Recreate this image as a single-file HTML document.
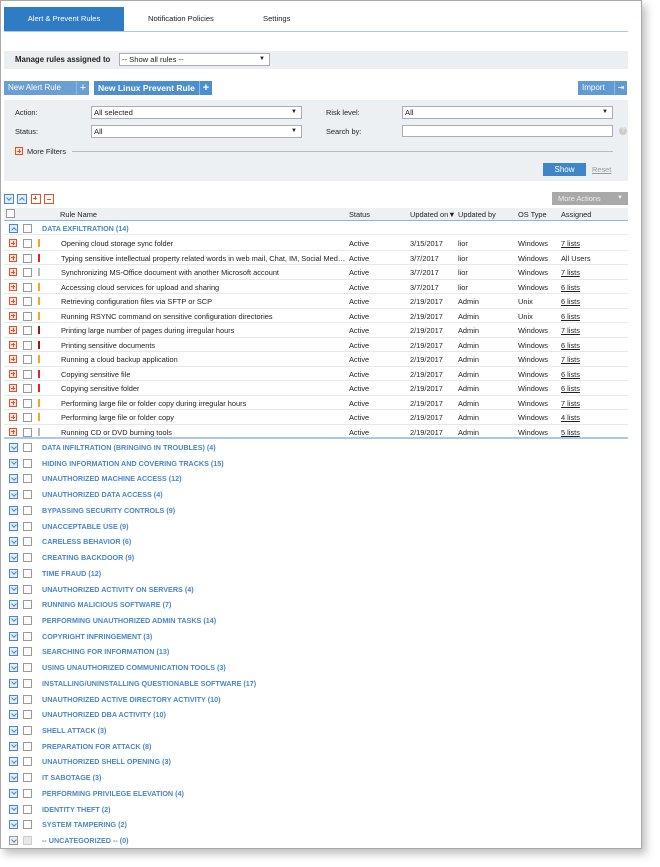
<!DOCTYPE html>
<html><head><meta charset="utf-8"><style>
*{box-sizing:border-box;margin:0;padding:0}
body{width:660px;height:867px;background:#fff;font-family:"Liberation Sans",sans-serif;font-size:7.4px;color:#222;position:relative;overflow:hidden}
.a{position:absolute;white-space:nowrap}
#frame{position:absolute;left:0;top:0;width:642px;height:849px;border:1px solid #a8a8a8;box-shadow:4px 5px 8px rgba(0,0,0,.25);background:#fff}
.sel{position:absolute;background:#fff;border:1px solid #aab;height:13px;font-size:7.6px;padding-left:2px;line-height:11px}
.sel:after{content:"▼";position:absolute;right:4px;top:0;font-size:6px}
.btn{position:absolute;background:#4d8fcd;color:#fff;height:14px;line-height:14px;font-size:8px;padding-left:4px}
.pl{position:absolute;right:0;top:0;width:13px;height:14px;border-left:1px solid #8fb8e0;text-align:center;font-size:11px;line-height:14px}
.cb{position:absolute;width:9px;height:9px;border:1px solid #999;background:#fff}
.ex{position:absolute;width:8px;height:8px;border:1px solid #e0522a;background:#fde2d8}
.ex:before{content:"";position:absolute;left:1px;top:2.5px;width:4px;height:1px;background:#e0522a}
.ex:after{content:"";position:absolute;left:2.5px;top:1px;width:1px;height:4px;background:#e0522a}
.gx{position:absolute;width:9px;height:9px;border:1px solid #4a86c8;background:#e3eefa}
.gx:after{content:"";position:absolute;left:1.5px;top:0.5px;width:3px;height:3px;border-right:1px solid #4a86c8;border-bottom:1px solid #4a86c8;transform:rotate(45deg)}
.gx.up:after{top:2.5px;transform:rotate(225deg)}
.g{position:absolute;left:42px;font-weight:bold;color:#4a86c8;font-size:7.2px;white-space:nowrap}
.bar{position:absolute;width:2px;height:8px}
.r{position:absolute;left:4px;width:624px;height:14.5px;border-bottom:1px solid #e6e9ec}
.n{position:absolute;left:61px;max-width:285px;overflow:hidden;text-overflow:ellipsis;white-space:nowrap}
u{text-decoration:underline}
</style></head><body>
<div id="frame"></div>
<div class="a" style="left:4px;top:7px;width:120px;height:24px;background:#2f7bc4;color:#fff;text-align:center;line-height:24px;font-size:7.6px">Alert &amp; Prevent Rules</div>
<div class="a" style="left:148px;top:14px;font-size:7.6px">Notification Policies</div>
<div class="a" style="left:263px;top:14px;font-size:7.6px">Settings</div>
<div class="a" style="left:4px;top:31px;width:624px;height:1px;background:#a9c9e8"></div>
<div class="a" style="left:4px;top:51px;width:624px;height:18px;background:#eceff2"></div>
<div class="a" style="left:15px;top:55px;font-weight:bold;font-size:7.8px">Manage rules assigned to</div>
<div class="sel" style="left:119px;top:53px;width:151px">-- Show all rules --</div>
<div class="btn" style="left:4px;top:81px;width:85px;background:#6b9fd4">New Alert Rule<span class="pl">+</span></div>
<div class="btn" style="left:94px;top:81px;width:118px;font-weight:bold;font-size:8.5px">New Linux Prevent Rule<span class="pl">+</span></div>
<div class="btn" style="left:578px;top:81px;width:49px;background:#5f9ad3">Import<span class="pl" style="font-size:8px">⇥</span></div>
<div class="a" style="left:4px;top:100px;width:624px;height:81px;background:#edf0f3"></div>
<div class="a" style="left:15px;top:108px">Action:</div>
<div class="sel" style="left:91px;top:106px;width:211px">All selected</div>
<div class="a" style="left:15px;top:127px">Status:</div>
<div class="sel" style="left:91px;top:125px;width:211px">All</div>
<div class="a" style="left:326px;top:108px">Risk level:</div>
<div class="sel" style="left:402px;top:106px;width:211px">All</div>
<div class="a" style="left:326px;top:127px">Search by:</div>
<div class="a" style="left:402px;top:125px;width:211px;height:12px;background:#fff;border:1px solid #aab"></div>
<div class="a" style="left:619px;top:127px;width:8px;height:8px;border-radius:50%;background:#ccc;color:#fff;font-size:6px;text-align:center;line-height:8px">?</div>
<div class="ex" style="left:15px;top:147px"></div>
<div class="a" style="left:27px;top:147px">More Filters</div>
<div class="a" style="left:72px;top:151px;width:541px;height:1px;background:#bbb"></div>
<div class="btn" style="left:543px;top:163px;width:43px;height:13px;line-height:13px;text-align:center;padding:0;background:#3f86c9">Show</div>
<div class="a" style="left:592px;top:165px;color:#999;text-decoration:underline">Reset</div>
<div class="gx" style="left:4px;top:194px;width:10px;height:10px"></div>
<div class="gx up" style="left:17px;top:194px;width:10px;height:10px"></div>
<div class="ex" style="left:31px;top:194px;width:10px;height:10px;background:#fff"></div>
<div class="a" style="left:44px;top:194px;width:10px;height:10px;border:1px solid #e0522a;background:#fff"><div style="position:absolute;left:2px;top:3.5px;width:4px;height:1px;background:#e0522a"></div></div>
<div class="a" style="left:552px;top:192px;width:76px;height:13px;background:#a9a9a9;color:#eee;line-height:13px;padding-left:6px">More Actions<span style="position:absolute;right:5px;font-size:6px">▼</span></div>
<div class="a" style="left:4px;top:208px;width:624px;height:13px;background:#eef0f2;border-bottom:1px solid #8db6de"></div>
<div class="cb" style="left:6px;top:209px"></div>
<div class="a" style="left:60px;top:210px">Rule Name</div>
<div class="a" style="left:349px;top:210px">Status</div>
<div class="a" style="left:410px;top:210px">Updated on▼</div>
<div class="a" style="left:458px;top:210px">Updated by</div>
<div class="a" style="left:518px;top:210px">OS Type</div>
<div class="a" style="left:561px;top:210px">Assigned</div>
<div class="r" style="top:221px;height:14px"></div>
<div class="gx up" style="left:9px;top:224px"></div>
<div class="cb" style="left:23px;top:224px"></div>
<div class="g" style="top:224px">DATA EXFILTRATION (14)</div>
<div class="r" style="top:236px"></div><div class="ex" style="left:9px;top:239px"></div><div class="cb" style="left:23px;top:239px"></div><div class="bar" style="left:38px;top:239px;background:#f5a623"></div><div class="n" style="top:239px">Opening cloud storage sync folder</div><div class="a" style="left:349px;top:239px">Active</div><div class="a" style="left:410px;top:239px">3/15/2017</div><div class="a" style="left:458px;top:239px">lior</div><div class="a" style="left:518px;top:239px">Windows</div><div class="a" style="left:561px;top:239px"><u>7 lists</u></div>
<div class="r" style="top:250.5px"></div><div class="ex" style="left:9px;top:253.5px"></div><div class="cb" style="left:23px;top:253.5px"></div><div class="bar" style="left:38px;top:253.5px;background:#e8212a"></div><div class="n" style="top:253.5px">Typing sensitive intellectual property related words in web mail, Chat, IM, Social Media...</div><div class="a" style="left:349px;top:253.5px">Active</div><div class="a" style="left:410px;top:253.5px">3/7/2017</div><div class="a" style="left:458px;top:253.5px">lior</div><div class="a" style="left:518px;top:253.5px">Windows</div><div class="a" style="left:561px;top:253.5px">All Users</div>
<div class="r" style="top:265px"></div><div class="ex" style="left:9px;top:268px"></div><div class="cb" style="left:23px;top:268px"></div><div class="bar" style="left:38px;top:268px;background:#bbb"></div><div class="n" style="top:268px">Synchronizing MS-Office document with another Microsoft account</div><div class="a" style="left:349px;top:268px">Active</div><div class="a" style="left:410px;top:268px">3/7/2017</div><div class="a" style="left:458px;top:268px">lior</div><div class="a" style="left:518px;top:268px">Windows</div><div class="a" style="left:561px;top:268px"><u>7 lists</u></div>
<div class="r" style="top:279.5px"></div><div class="ex" style="left:9px;top:282.5px"></div><div class="cb" style="left:23px;top:282.5px"></div><div class="bar" style="left:38px;top:282.5px;background:#f5a623"></div><div class="n" style="top:282.5px">Accessing cloud services for upload and sharing</div><div class="a" style="left:349px;top:282.5px">Active</div><div class="a" style="left:410px;top:282.5px">3/7/2017</div><div class="a" style="left:458px;top:282.5px">lior</div><div class="a" style="left:518px;top:282.5px">Windows</div><div class="a" style="left:561px;top:282.5px"><u>6 lists</u></div>
<div class="r" style="top:294px"></div><div class="ex" style="left:9px;top:297px"></div><div class="cb" style="left:23px;top:297px"></div><div class="bar" style="left:38px;top:297px;background:#f5a623"></div><div class="n" style="top:297px">Retrieving configuration files via SFTP or SCP</div><div class="a" style="left:349px;top:297px">Active</div><div class="a" style="left:410px;top:297px">2/19/2017</div><div class="a" style="left:458px;top:297px">Admin</div><div class="a" style="left:518px;top:297px">Unix</div><div class="a" style="left:561px;top:297px"><u>6 lists</u></div>
<div class="r" style="top:308.5px"></div><div class="ex" style="left:9px;top:311.5px"></div><div class="cb" style="left:23px;top:311.5px"></div><div class="bar" style="left:38px;top:311.5px;background:#f5a623"></div><div class="n" style="top:311.5px">Running RSYNC command on sensitive configuration directories</div><div class="a" style="left:349px;top:311.5px">Active</div><div class="a" style="left:410px;top:311.5px">2/19/2017</div><div class="a" style="left:458px;top:311.5px">Admin</div><div class="a" style="left:518px;top:311.5px">Unix</div><div class="a" style="left:561px;top:311.5px"><u>6 lists</u></div>
<div class="r" style="top:323px"></div><div class="ex" style="left:9px;top:326px"></div><div class="cb" style="left:23px;top:326px"></div><div class="bar" style="left:38px;top:326px;background:#a0161c"></div><div class="n" style="top:326px">Printing large number of pages during irregular hours</div><div class="a" style="left:349px;top:326px">Active</div><div class="a" style="left:410px;top:326px">2/19/2017</div><div class="a" style="left:458px;top:326px">Admin</div><div class="a" style="left:518px;top:326px">Windows</div><div class="a" style="left:561px;top:326px"><u>7 lists</u></div>
<div class="r" style="top:337.5px"></div><div class="ex" style="left:9px;top:340.5px"></div><div class="cb" style="left:23px;top:340.5px"></div><div class="bar" style="left:38px;top:340.5px;background:#a0161c"></div><div class="n" style="top:340.5px">Printing sensitive documents</div><div class="a" style="left:349px;top:340.5px">Active</div><div class="a" style="left:410px;top:340.5px">2/19/2017</div><div class="a" style="left:458px;top:340.5px">Admin</div><div class="a" style="left:518px;top:340.5px">Windows</div><div class="a" style="left:561px;top:340.5px"><u>6 lists</u></div>
<div class="r" style="top:352px"></div><div class="ex" style="left:9px;top:355px"></div><div class="cb" style="left:23px;top:355px"></div><div class="bar" style="left:38px;top:355px;background:#f5a623"></div><div class="n" style="top:355px">Running a cloud backup application</div><div class="a" style="left:349px;top:355px">Active</div><div class="a" style="left:410px;top:355px">2/19/2017</div><div class="a" style="left:458px;top:355px">Admin</div><div class="a" style="left:518px;top:355px">Windows</div><div class="a" style="left:561px;top:355px"><u>7 lists</u></div>
<div class="r" style="top:366.5px"></div><div class="ex" style="left:9px;top:369.5px"></div><div class="cb" style="left:23px;top:369.5px"></div><div class="bar" style="left:38px;top:369.5px;background:#e8212a"></div><div class="n" style="top:369.5px">Copying sensitive file</div><div class="a" style="left:349px;top:369.5px">Active</div><div class="a" style="left:410px;top:369.5px">2/19/2017</div><div class="a" style="left:458px;top:369.5px">Admin</div><div class="a" style="left:518px;top:369.5px">Windows</div><div class="a" style="left:561px;top:369.5px"><u>6 lists</u></div>
<div class="r" style="top:381px"></div><div class="ex" style="left:9px;top:384px"></div><div class="cb" style="left:23px;top:384px"></div><div class="bar" style="left:38px;top:384px;background:#e8212a"></div><div class="n" style="top:384px">Copying sensitive folder</div><div class="a" style="left:349px;top:384px">Active</div><div class="a" style="left:410px;top:384px">2/19/2017</div><div class="a" style="left:458px;top:384px">Admin</div><div class="a" style="left:518px;top:384px">Windows</div><div class="a" style="left:561px;top:384px"><u>6 lists</u></div>
<div class="r" style="top:395.5px"></div><div class="ex" style="left:9px;top:398.5px"></div><div class="cb" style="left:23px;top:398.5px"></div><div class="bar" style="left:38px;top:398.5px;background:#f5a623"></div><div class="n" style="top:398.5px">Performing large file or folder copy during irregular hours</div><div class="a" style="left:349px;top:398.5px">Active</div><div class="a" style="left:410px;top:398.5px">2/19/2017</div><div class="a" style="left:458px;top:398.5px">Admin</div><div class="a" style="left:518px;top:398.5px">Windows</div><div class="a" style="left:561px;top:398.5px"><u>7 lists</u></div>
<div class="r" style="top:410px"></div><div class="ex" style="left:9px;top:413px"></div><div class="cb" style="left:23px;top:413px"></div><div class="bar" style="left:38px;top:413px;background:#f5a623"></div><div class="n" style="top:413px">Performing large file or folder copy</div><div class="a" style="left:349px;top:413px">Active</div><div class="a" style="left:410px;top:413px">2/19/2017</div><div class="a" style="left:458px;top:413px">Admin</div><div class="a" style="left:518px;top:413px">Windows</div><div class="a" style="left:561px;top:413px"><u>4 lists</u></div>
<div class="r" style="top:424.5px;border-bottom:2px solid #a9c9e8"></div><div class="ex" style="left:9px;top:427.5px"></div><div class="cb" style="left:23px;top:427.5px"></div><div class="bar" style="left:38px;top:427.5px;background:#bbb"></div><div class="n" style="top:427.5px">Running CD or DVD burning tools</div><div class="a" style="left:349px;top:427.5px">Active</div><div class="a" style="left:410px;top:427.5px">2/19/2017</div><div class="a" style="left:458px;top:427.5px">Admin</div><div class="a" style="left:518px;top:427.5px">Windows</div><div class="a" style="left:561px;top:427.5px"><u>5 lists</u></div>
<div class="gx" style="left:9px;top:443px"></div><div class="cb" style="left:23px;top:443px"></div><div class="g" style="top:443px">DATA INFILTRATION (BRINGING IN TROUBLES) (4)</div>
<div class="gx" style="left:9px;top:458.7px"></div><div class="cb" style="left:23px;top:458.7px"></div><div class="g" style="top:458.7px">HIDING INFORMATION AND COVERING TRACKS (15)</div>
<div class="gx" style="left:9px;top:474.4px"></div><div class="cb" style="left:23px;top:474.4px"></div><div class="g" style="top:474.4px">UNAUTHORIZED MACHINE ACCESS (12)</div>
<div class="gx" style="left:9px;top:490.2px"></div><div class="cb" style="left:23px;top:490.2px"></div><div class="g" style="top:490.2px">UNAUTHORIZED DATA ACCESS (4)</div>
<div class="gx" style="left:9px;top:505.9px"></div><div class="cb" style="left:23px;top:505.9px"></div><div class="g" style="top:505.9px">BYPASSING SECURITY CONTROLS (9)</div>
<div class="gx" style="left:9px;top:521.6px"></div><div class="cb" style="left:23px;top:521.6px"></div><div class="g" style="top:521.6px">UNACCEPTABLE USE (9)</div>
<div class="gx" style="left:9px;top:537.3px"></div><div class="cb" style="left:23px;top:537.3px"></div><div class="g" style="top:537.3px">CARELESS BEHAVIOR (6)</div>
<div class="gx" style="left:9px;top:553px"></div><div class="cb" style="left:23px;top:553px"></div><div class="g" style="top:553px">CREATING BACKDOOR (9)</div>
<div class="gx" style="left:9px;top:568.8px"></div><div class="cb" style="left:23px;top:568.8px"></div><div class="g" style="top:568.8px">TIME FRAUD (12)</div>
<div class="gx" style="left:9px;top:584.5px"></div><div class="cb" style="left:23px;top:584.5px"></div><div class="g" style="top:584.5px">UNAUTHORIZED ACTIVITY ON SERVERS (4)</div>
<div class="gx" style="left:9px;top:600.2px"></div><div class="cb" style="left:23px;top:600.2px"></div><div class="g" style="top:600.2px">RUNNING MALICIOUS SOFTWARE (7)</div>
<div class="gx" style="left:9px;top:615.9px"></div><div class="cb" style="left:23px;top:615.9px"></div><div class="g" style="top:615.9px">PERFORMING UNAUTHORIZED ADMIN TASKS (14)</div>
<div class="gx" style="left:9px;top:631.6px"></div><div class="cb" style="left:23px;top:631.6px"></div><div class="g" style="top:631.6px">COPYRIGHT INFRINGEMENT (3)</div>
<div class="gx" style="left:9px;top:647.4px"></div><div class="cb" style="left:23px;top:647.4px"></div><div class="g" style="top:647.4px">SEARCHING FOR INFORMATION (13)</div>
<div class="gx" style="left:9px;top:663.1px"></div><div class="cb" style="left:23px;top:663.1px"></div><div class="g" style="top:663.1px">USING UNAUTHORIZED COMMUNICATION TOOLS (3)</div>
<div class="gx" style="left:9px;top:678.8px"></div><div class="cb" style="left:23px;top:678.8px"></div><div class="g" style="top:678.8px">INSTALLING/UNINSTALLING QUESTIONABLE SOFTWARE (17)</div>
<div class="gx" style="left:9px;top:694.5px"></div><div class="cb" style="left:23px;top:694.5px"></div><div class="g" style="top:694.5px">UNAUTHORIZED ACTIVE DIRECTORY ACTIVITY (10)</div>
<div class="gx" style="left:9px;top:710.2px"></div><div class="cb" style="left:23px;top:710.2px"></div><div class="g" style="top:710.2px">UNAUTHORIZED DBA ACTIVITY (10)</div>
<div class="gx" style="left:9px;top:726px"></div><div class="cb" style="left:23px;top:726px"></div><div class="g" style="top:726px">SHELL ATTACK (3)</div>
<div class="gx" style="left:9px;top:741.7px"></div><div class="cb" style="left:23px;top:741.7px"></div><div class="g" style="top:741.7px">PREPARATION FOR ATTACK (8)</div>
<div class="gx" style="left:9px;top:757.4px"></div><div class="cb" style="left:23px;top:757.4px"></div><div class="g" style="top:757.4px">UNAUTHORIZED SHELL OPENING (3)</div>
<div class="gx" style="left:9px;top:773.1px"></div><div class="cb" style="left:23px;top:773.1px"></div><div class="g" style="top:773.1px">IT SABOTAGE (3)</div>
<div class="gx" style="left:9px;top:788.8px"></div><div class="cb" style="left:23px;top:788.8px"></div><div class="g" style="top:788.8px">PERFORMING PRIVILEGE ELEVATION (4)</div>
<div class="gx" style="left:9px;top:804.6px"></div><div class="cb" style="left:23px;top:804.6px"></div><div class="g" style="top:804.6px">IDENTITY THEFT (2)</div>
<div class="gx" style="left:9px;top:820.3px"></div><div class="cb" style="left:23px;top:820.3px"></div><div class="g" style="top:820.3px">SYSTEM TAMPERING (2)</div>
<div class="gx" style="left:9px;top:836px;border-color:#999;background:#eee"></div><div class="cb" style="left:23px;top:836px;border-color:#ccc;background:#e8e8e8"></div><div class="g" style="top:836px">-- UNCATEGORIZED -- (0)</div>
</body></html>
